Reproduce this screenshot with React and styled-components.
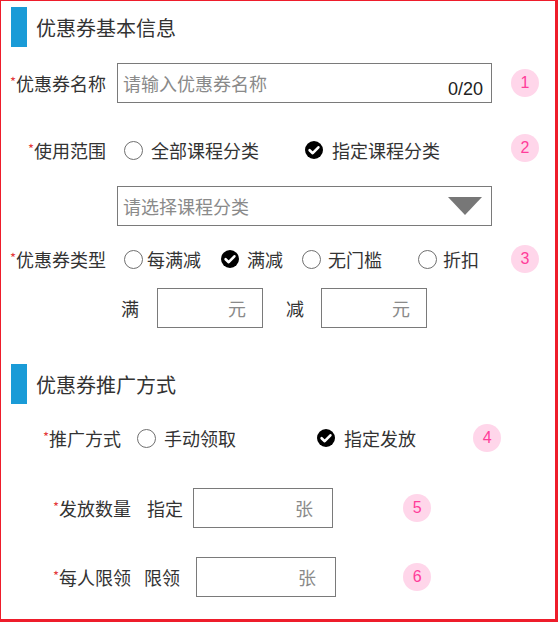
import styled, { createGlobalStyle } from "styled-components";

const GlobalStyle = createGlobalStyle`
  html, body {
    margin: 0;
    padding: 0;
    background: #fff;
  }
  body {
    font-family: "Noto Sans CJK SC", "Noto Sans", sans-serif;
    color: #333;
  }
`;

const Page = styled.div`
  box-sizing: border-box;
  width: 558px;
  height: 622px;
  border-style: solid;
  border-color: #ee1d2b;
  border-width: 1px 3px 3px 1px;
  padding: 6px 16px 0 0;
  display: flex;
  flex-direction: column;
`;

const SectionHead = styled.div`
  display: flex;
  align-items: center;
  height: 40px;
  padding-left: 10px;
  margin-top: ${(p) => p.$mt || 0}px;
  font-size: 20px;
  color: #333;
  & > span {
    display: block;
    width: 16px;
    height: 40px;
    background: #1a9bd7;
    margin-right: 9px;
  }
`;

const Row = styled.div`
  display: flex;
  align-items: center;
  height: 40px;
  margin-top: ${(p) => p.$mt || 0}px;
  padding-left: ${(p) => p.$pl || 0}px;
  font-size: 18px;
  line-height: 1;
`;

const Label = styled.div`
  width: ${(p) => (p.$w ? p.$w + "px" : "auto")};
  text-align: right;
  margin-right: ${(p) => p.$mr || 0}px;
  white-space: nowrap;
  color: #333;
`;

const Star = styled.span`
  color: #e4393c;
  font-size: 13px;
  vertical-align: top;
  position: relative;
  top: 1px;
`;

const Box = styled.div`
  box-sizing: border-box;
  width: ${(p) => p.$w}px;
  height: 40px;
  border: 1px solid #7a7a7a;
  display: flex;
  align-items: center;
  justify-content: ${(p) => (p.$end ? "flex-end" : "space-between")};
  padding: 0 ${(p) => p.$pr || 8}px 0 5px;
  color: #8a8a8a;
  font-size: 18px;
`;

const Counter = styled.span`
  color: #222;
  font-family: "Liberation Sans", Arial, sans-serif;
  font-size: 18px;
  margin-top: 11px;
`;

const Triangle = styled.span`
  width: 0;
  height: 0;
  border-left: 17px solid transparent;
  border-right: 17px solid transparent;
  border-top: 18px solid #777;
`;

const Option = styled.div`
  display: flex;
  align-items: center;
  width: ${(p) => (p.$w ? p.$w + "px" : "auto")};
  color: #333;
  white-space: nowrap;
`;

const RadioDot = styled.span`
  box-sizing: border-box;
  display: block;
  width: 19px;
  height: 19px;
  border: 1px solid #6f6f6f;
  border-radius: 50%;
  margin-right: ${(p) => p.$gap || 7}px;
  flex-shrink: 0;
`;

const CheckWrap = styled.span`
  display: flex;
  margin-right: ${(p) => p.$gap || 8}px;
`;

const Text = styled.span`
  margin-left: ${(p) => p.$ml || 0}px;
  margin-right: ${(p) => p.$mr || 0}px;
  color: #333;
  white-space: nowrap;
`;

const Badge = styled.div`
  width: 28px;
  height: 28px;
  border-radius: 50%;
  background: #ffd6ea;
  color: #ff3d9a;
  font-family: "Liberation Sans", Arial, sans-serif;
  font-size: 16px;
  display: flex;
  align-items: center;
  justify-content: center;
  margin-left: ${(p) => (p.$ml ? p.$ml + "px" : "auto")};
  margin-top: ${(p) => p.$dy || 0}px;
  flex-shrink: 0;
`;

const Check = ({ gap }) => (
  <CheckWrap $gap={gap}>
    <svg width="18" height="18" viewBox="0 0 18 18">
      <circle cx="9" cy="9" r="9" fill="#000" />
      <path
        d="M4.6 9.2 L7.7 12.2 L13.4 6.3"
        fill="none"
        stroke="#fff"
        strokeWidth="2.6"
        strokeLinecap="round"
        strokeLinejoin="round"
      />
    </svg>
  </CheckWrap>
);

const Req = ({ children, w, mr }) => (
  <Label $w={w} $mr={mr}>
    <Star>*</Star>
    {children}
  </Label>
);

export default function App() {
  return (
    <>
      <GlobalStyle />
      <Page>
        <SectionHead>
          <span />
          优惠券基本信息
        </SectionHead>

        <Row $mt={16}>
          <Req w={105} mr={11}>优惠券名称</Req>
          <Box $w={375}>
            请输入优惠券名称
            <Counter>0/20</Counter>
          </Box>
          <Badge>1</Badge>
        </Row>

        <Row $mt={27}>
          <Req w={105} mr={18}>使用范围</Req>
          <Option $w={181}>
            <RadioDot $gap={8} />
            全部课程分类
          </Option>
          <Option>
            <Check gap={9} />
            指定课程分类
          </Option>
          <Badge $dy={-4}>2</Badge>
        </Row>

        <Row $mt={16} $pl={116}>
          <Box $w={375} $pr={9}>
            请选择课程分类
            <Triangle />
          </Box>
        </Row>

        <Row $mt={13}>
          <Req w={105} mr={18}>优惠券类型</Req>
          <Option $w={97}>
            <RadioDot $gap={4} />
            每满减
          </Option>
          <Option $w={81}>
            <Check gap={8} />
            满减
          </Option>
          <Option $w={116}>
            <RadioDot $gap={7} />
            无门槛
          </Option>
          <Option>
            <RadioDot $gap={6} />
            折扣
          </Option>
          <Badge>3</Badge>
        </Row>

        <Row $mt={9} $pl={120}>
          <Text $mr={18}>满</Text>
          <Box $w={106} $pr={16} $end>
            元
          </Box>
          <Text $ml={23} $mr={17}>减</Text>
          <Box $w={106} $pr={16} $end>
            元
          </Box>
        </Row>

        <SectionHead $mt={36}>
          <span />
          优惠券推广方式
        </SectionHead>

        <Row $mt={14} $pl={42}>
          <Req mr={16}>推广方式</Req>
          <Option $w={180}>
            <RadioDot $gap={8} />
            手动领取
          </Option>
          <Option>
            <Check gap={9} />
            指定发放
          </Option>
          <Badge $ml={57}>4</Badge>
        </Row>

        <Row $mt={30} $pl={52}>
          <Req mr={16}>发放数量</Req>
          <Text $mr={10}>指定</Text>
          <Box $w={140} $pr={19} $end>
            张
          </Box>
          <Badge $ml={70}>5</Badge>
        </Row>

        <Row $mt={29} $pl={52}>
          <Req mr={13}>每人限领</Req>
          <Text $mr={16}>限领</Text>
          <Box $w={140} $pr={19} $end>
            张
          </Box>
          <Badge $ml={67}>6</Badge>
        </Row>
      </Page>
    </>
  );
}
